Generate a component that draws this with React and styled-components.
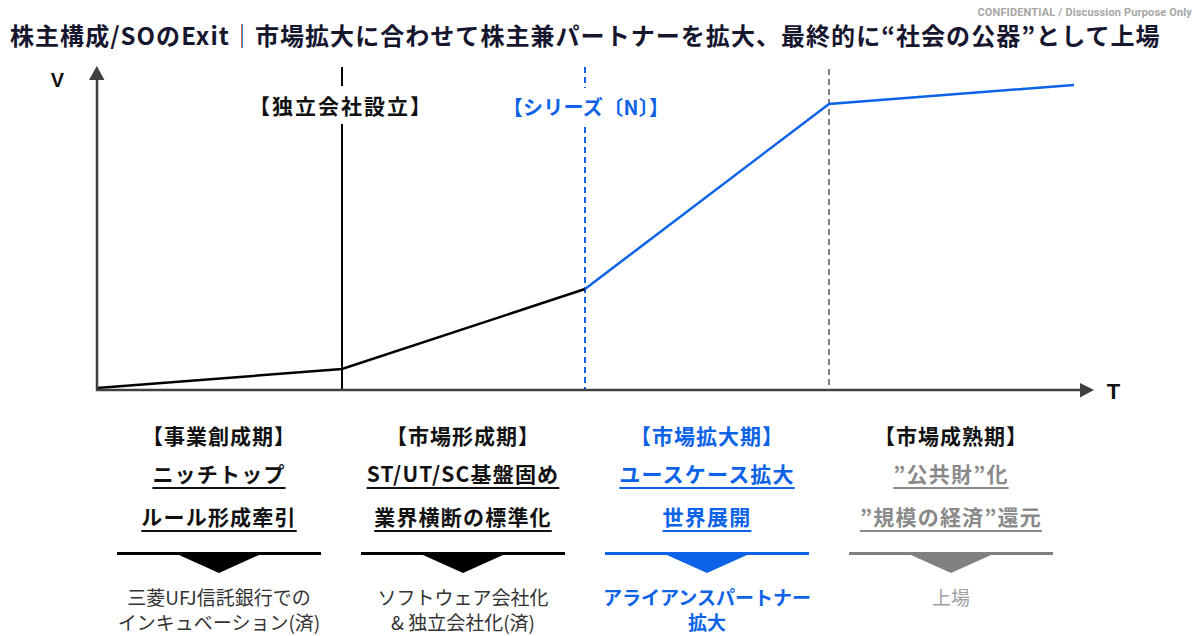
import React from "react";
import styled, { createGlobalStyle } from "styled-components";

const JP = `"Noto Sans CJK JP", "Noto Sans", sans-serif`;
const BLUE = "#0c63e7";

const GlobalStyle = createGlobalStyle`
  html, body { margin: 0; padding: 0; background: #fff; }
  body { font-family: ${JP}; color: #111; }
`;

const Page = styled.div`
  width: 1200px;
  height: 636px;
  overflow: hidden;
  background: #fff;
`;

const Confidential = styled.div`
  height: 16px;
  padding: 5px 8px 0 0;
  text-align: right;
  font-family: Roboto, "Liberation Sans", sans-serif;
  font-size: 11px;
  font-weight: 700;
  line-height: 16px;
  letter-spacing: 0.15px;
  color: #a6a6a6;
`;

const Title = styled.h1`
  margin: 0 0 0 10px;
  font-size: 24px;
  line-height: 28px;
  font-weight: 700;
  letter-spacing: 1.05px;
  color: #16162f;
  white-space: nowrap;
`;

const ChartFrame = styled.div`
  position: relative;
  margin-top: 11px;
  height: 350px;
`;

const ChartSvg = styled.svg`
  position: absolute;
  inset: 0;
  width: 1200px;
  height: 350px;
`;

// labels sitting on the chart canvas
const AxisLabel = styled.span`
  position: absolute;
  left: ${(p) => p.$x}px;
  top: ${(p) => p.$y}px;
  transform: translate(-50%, -50%);
  font-family: "Liberation Sans", Arial, sans-serif;
  font-weight: 700;
  font-size: ${(p) => p.$size}px;
  line-height: 1;
  color: #111;
`;

const EventLabel = styled.span`
  position: absolute;
  left: ${(p) => p.$x}px;
  top: ${(p) => p.$y}px;
  transform: translate(-50%, -50%);
  padding: 0 2px;
  background: #fff;
  font-size: ${(p) => p.$size}px;
  font-weight: 700;
  line-height: 38px;
  letter-spacing: ${(p) => p.$spacing || 0}px;
  white-space: nowrap;
  color: ${(p) => p.$color};
`;

const Phases = styled.div`
  display: grid;
  grid-template-columns: repeat(4, 244px);
  padding: 10px 0 0 97px;
`;

const Phase = styled.div`
  display: flex;
  flex-direction: column;
  align-items: center;
`;

const PhaseTitle = styled.div`
  font-size: 21px;
  font-weight: 700;
  line-height: 30px;
  letter-spacing: 1px;
  color: ${(p) => p.$color};
`;

const Items = styled.div`
  margin-top: 1.5px;
  display: flex;
  flex-direction: column;
  align-items: center;
`;

const Item = styled.div`
  font-size: 21px;
  font-weight: 700;
  line-height: 43px;
  letter-spacing: 1.2px;
  white-space: nowrap;
  color: ${(p) => p.$color};
  text-decoration: underline;
  text-decoration-thickness: 2px;
  text-underline-offset: 5px;
`;

const Bar = styled.div`
  margin-top: 14.5px;
  width: 204px;
  height: 3px;
  background: ${(p) => p.$color};
`;

const Pointer = styled.div`
  width: 0;
  height: 0;
  border-left: 40px solid transparent;
  border-right: 40px solid transparent;
  border-top: 18px solid ${(p) => p.$color};
`;

const Result = styled.div`
  margin-top: 11px;
  font-size: 19px;
  line-height: 25px;
  text-align: center;
  white-space: nowrap;
  font-weight: ${(p) => (p.$bold ? 700 : 400)};
  color: ${(p) => p.$color};
`;

const phases = [
  {
    title: "【事業創成期】",
    titleColor: "#111",
    items: ["ニッチトップ", "ルール形成牽引"],
    itemColor: "#111",
    bar: "#000",
    result: ["三菱UFJ信託銀行での", "インキュベーション(済)"],
    resultColor: "#333",
  },
  {
    title: "【市場形成期】",
    titleColor: "#111",
    items: ["ST/UT/SC基盤固め", "業界横断の標準化"],
    itemColor: "#111",
    bar: "#000",
    result: ["ソフトウェア会社化", "& 独立会社化(済)"],
    resultColor: "#333",
  },
  {
    title: "【市場拡大期】",
    titleColor: BLUE,
    items: ["ユースケース拡大", "世界展開"],
    itemColor: BLUE,
    bar: BLUE,
    result: ["アライアンスパートナー", "拡大"],
    resultColor: BLUE,
    bold: true,
  },
  {
    title: "【市場成熟期】",
    titleColor: "#111",
    items: ["”公共財”化", "”規模の経済”還元"],
    itemColor: "#8a8a8a",
    bar: "#808080",
    result: ["上場"],
    resultColor: "#a0a0a0",
  },
];

const Chart = () => (
  <ChartFrame>
    {/* viewBox uses page coordinates (frame starts at y=60) */}
    <ChartSvg viewBox="0 60 1200 350">
      <line x1="342" y1="67" x2="342" y2="390" stroke="#000" strokeWidth="2" />
      <line x1="585" y1="67" x2="585" y2="390" stroke={BLUE} strokeWidth="2" strokeDasharray="6 4" />
      <line x1="829" y1="69" x2="829" y2="390" stroke="#7f7f7f" strokeWidth="2" strokeDasharray="6 4" />

      <polyline points="97,388 342,369 585,289" fill="none" stroke="#000" strokeWidth="2.5" />
      <polyline points="585,289 829,104 1074,85" fill="none" stroke={BLUE} strokeWidth="2.5" />

      <line x1="97" y1="391" x2="97" y2="78" stroke="#404040" strokeWidth="2.5" />
      <polygon points="89,80 104.5,80 96.8,66" fill="#404040" />
      <line x1="96" y1="390" x2="1082" y2="390" stroke="#404040" strokeWidth="2.5" />
      <polygon points="1080,383 1080,397.5 1094,390" fill="#404040" />
    </ChartSvg>
    <AxisLabel $x={57.5} $y={20} $size={20}>V</AxisLabel>
    <AxisLabel $x={1113.5} $y={332} $size={22}>T</AxisLabel>
    <EventLabel $x={341} $y={45} $size={21} $spacing={2} $color="#111">【独立会社設立】</EventLabel>
    <EventLabel $x={586} $y={47} $size={20} $spacing={0.3} $color={BLUE}>【シリーズ〔N〕】</EventLabel>
  </ChartFrame>
);

export default function App() {
  return (
    <Page>
      <GlobalStyle />
      <Confidential>CONFIDENTIAL / Discussion Purpose Only</Confidential>
      <Title>株主構成/SOのExit｜市場拡大に合わせて株主兼パートナーを拡大、最終的に“社会の公器”として上場</Title>
      <Chart />
      <Phases>
        {phases.map((p) => (
          <Phase key={p.title}>
            <PhaseTitle $color={p.titleColor}>{p.title}</PhaseTitle>
            <Items>
              {p.items.map((it) => (
                <Item key={it} $color={p.itemColor}>{it}</Item>
              ))}
            </Items>
            <Bar $color={p.bar} />
            <Pointer $color={p.bar} />
            <Result $color={p.resultColor} $bold={p.bold}>
              {p.result.map((line) => (
                <div key={line}>{line}</div>
              ))}
            </Result>
          </Phase>
        ))}
      </Phases>
    </Page>
  );
}
